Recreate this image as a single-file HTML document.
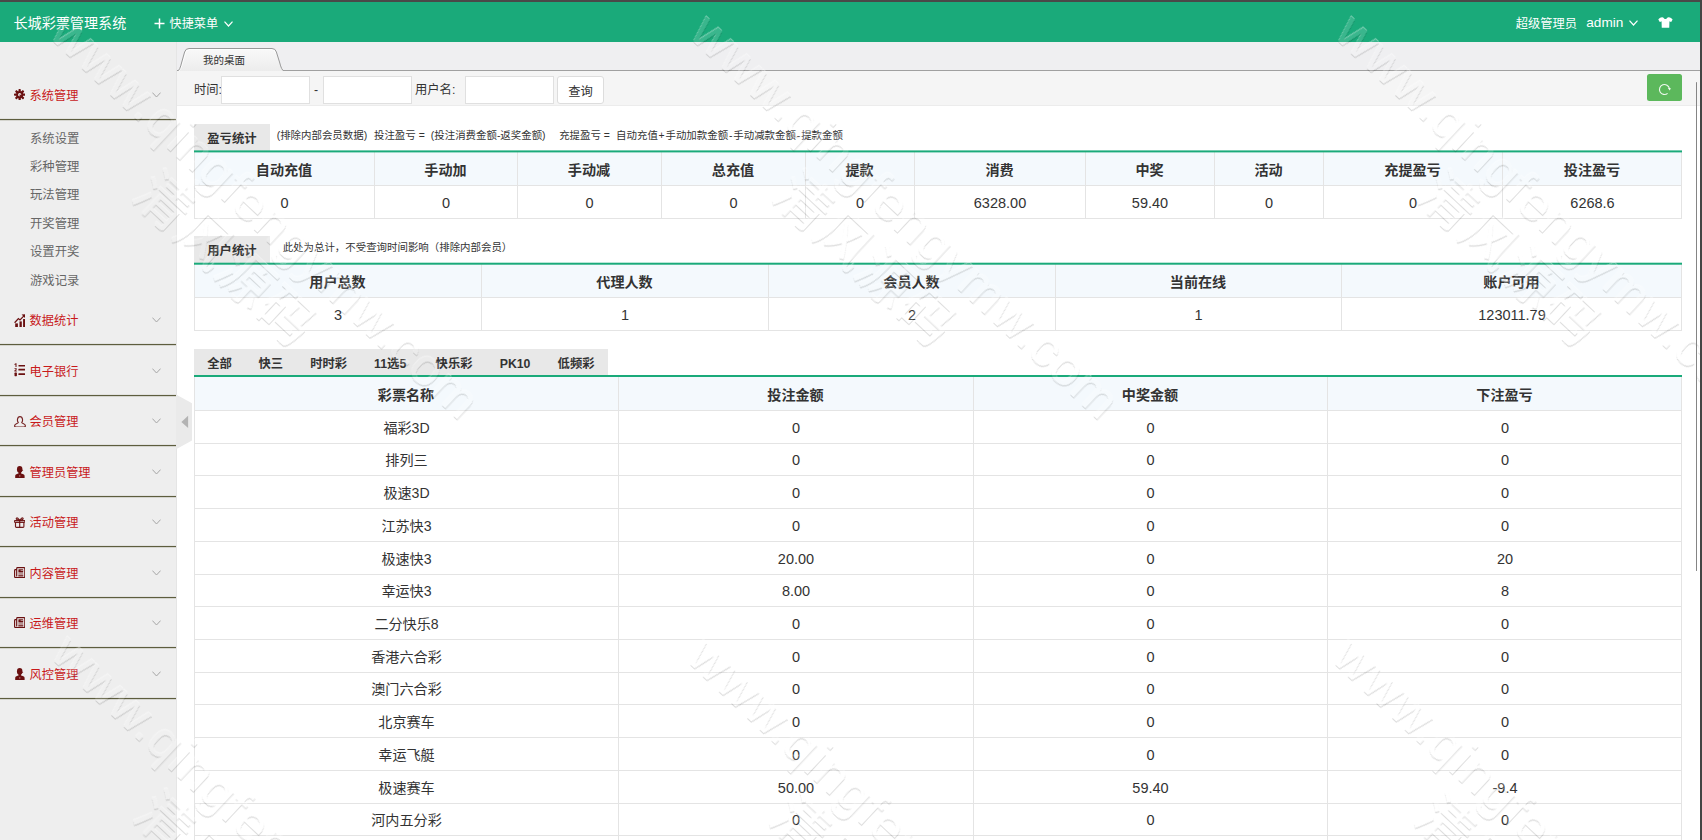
<!DOCTYPE html>
<html lang="zh-CN">
<head>
<meta charset="utf-8">
<title>长城彩票管理系统</title>
<style>
*{box-sizing:border-box;margin:0;padding:0}
html,body{width:1702px;height:840px;overflow:hidden;background:#fff}
body{font-family:"Liberation Sans","Noto Sans CJK SC",sans-serif;color:#333;position:relative}
#frame-top{position:absolute;left:0;top:0;width:1702px;height:2px;background:#4a4848;z-index:50}
#frame-right{position:absolute;left:1700px;top:0;width:2px;height:840px;background:#444;z-index:50}
#hdr{position:absolute;left:0;top:2px;width:1700px;height:40px;background:#1aaa7a;color:#fff}
#hdr span,#hdr svg{position:absolute;white-space:nowrap}
#hdr .title{left:13.5px;top:1px;line-height:41px;font-size:14.1px}
#hdr .q{left:169.6px;top:1.8px;line-height:41.6px;font-size:12.1px}
#hdr .u1{left:1515.8px;top:1.8px;line-height:40.4px;font-size:12.25px}
#hdr .u2{left:1586.3px;top:0.7px;line-height:40.4px;font-size:13.6px}
#side{position:absolute;left:0;top:42px;width:177px;height:798px;background:#eee;border-right:1px solid #e5e5e5}
#sidec{position:absolute;left:0;top:0;width:177px}
#sidec .sep{position:absolute;left:0;width:176px;height:1px;background:#5d5d3e;box-shadow:0 1px 0 rgba(93,93,62,.18),0 -1px 0 rgba(93,93,62,.08)}
#sidec .ic{position:absolute}
#sidec .mt{position:absolute;left:29.6px;line-height:20px;font-size:12.2px;color:#c8191b;white-space:nowrap}
#sidec .chev{position:absolute;left:152.3px}
#sidec .si{position:absolute;left:30px;line-height:20px;font-size:12.35px;color:#666;white-space:nowrap}
#handle{position:absolute;left:176px;top:395px;z-index:5}
#tabs{position:absolute;left:177px;top:42px;width:1523px;height:29px;background:#efeff1;border-bottom:1px solid #a0a0a0}
#tabs svg{position:absolute;left:0;top:5px}
#tabs span{position:absolute;left:26px;top:6.5px;line-height:22px;font-size:10.5px;color:#333}
#filter{position:absolute;left:177px;top:71px;width:1523px;height:35px;background:#f5f5f5;border-bottom:1px solid #ececec;font-size:12.3px;color:#333}
#filter label{position:absolute;top:2px;line-height:35px;white-space:nowrap}
#filter .inp{position:absolute;top:5px;height:28px;width:89px;background:#fff;border:1px solid #e0e0e0}
#filter .btn{position:absolute;left:380px;top:5px;width:47px;height:28px;background:#fff;border:1px solid #ddd;border-radius:3px;text-align:center;line-height:30.4px;font-size:12.3px;color:#333}
#filter .ref{position:absolute;left:1470px;top:3px;width:35px;height:27px;background:#5cb85c;border-radius:2.5px}
#filter .ref svg{position:absolute;left:11px;top:9.2px}
#sb{position:absolute;left:1695.6px;top:82px;width:1.6px;height:489px;background:#858585;border-radius:1px;z-index:40}
.stab{position:absolute;left:194px;background:#e8e8e8}
.stab span{position:absolute;top:3.7px;line-height:22px;font-weight:bold;font-size:12.3px;color:#333;white-space:nowrap}
.gl{position:absolute;left:194px;width:1488px;z-index:2}
.desc{position:absolute;line-height:22px;font-size:10.45px;color:#333;white-space:nowrap}
.desc b{position:absolute;top:0.5px;font-weight:normal}
.row{position:absolute;border-bottom:1px solid #e4e4e4;border-right:1px solid #e4e4e4}
.row.hr{background:#f4f9fd}
.row.dr{background:#fff}
.c{position:absolute;top:0;height:100%;border-left:1px solid #e4e4e4;text-align:center;white-space:nowrap;color:#333;overflow:hidden}
.hr .c{font-size:14.1px;font-weight:bold;padding-top:1.7px;text-indent:-1px}
.dr .c{font-size:14.5px;padding-top:1px}
.dr .c.nm{font-size:14.1px}

#wm{position:absolute;left:0;top:0;width:1700px;height:840px;overflow:hidden;z-index:30;pointer-events:none}
.wm{position:absolute;transform-origin:0 0;transform:rotate(43.1deg);text-align:center;white-space:nowrap;color:rgba(255,255,255,.14);filter:url(#emb);font-weight:normal}
.wm .l1{font-size:52.5px;line-height:58px;letter-spacing:1px}
.wm .l2{font-size:54px;line-height:62px;letter-spacing:2px}
</style>
</head>
<body>
<div id="frame-top"></div><div id="frame-right"></div>
<div id="hdr">
 <span class="title">长城彩票管理系统</span>
 <svg style="left:154px;top:16px" width="11" height="11" viewBox="0 0 11 11"><path d="M5.5 0.5V10.5M0.5 5.5H10.5" stroke="#fff" stroke-width="1.5" fill="none"/></svg>
 <span class="q">快捷菜单</span>
 <svg style="left:224px;top:18.7px" width="9" height="6" viewBox="0 0 9 6"><path d="M0.5 0.7L4.5 5L8.5 0.7" fill="none" stroke="#fff" stroke-width="1.2"/></svg>
 <span class="u1">超级管理员</span><span class="u2">admin</span>
 <svg style="left:1629.3px;top:18px" width="9" height="6" viewBox="0 0 9 6"><path d="M0.5 0.7L4.5 5L8.5 0.7" fill="none" stroke="#fff" stroke-width="1.2"/></svg>
 <svg style="left:1658.1px;top:15.2px" width="14.8" height="10.9" viewBox="0 0 15 11" preserveAspectRatio="none"><path d="M4.2 0.2 C5 0.2 5.6 0.6 6 1.2 Q7.5 2.9 9 1.2 C9.4 0.6 10 0.2 10.8 0.2 C12.6 0.5 14 1.4 14.8 2.6 L13.4 5.1 C12.8 5 12.2 4.7 11.6 4.3 L11.4 10.8 H3.8 L3.6 4.3 C3 4.7 2.4 5 1.8 5.1 L0.3 2.6 C1 1.4 2.4 0.5 4.2 0.2Z" fill="#fff"/></svg>
</div>
<div id="side"></div>
<div id="sidec">
<div class="sep" style="top:119px"></div><svg class="ic" style="left:13.8px;top:88.9px" width="11.3" height="11.3" viewBox="0 0 24 24"><g fill="#6a1010"><circle cx="12" cy="12" r="7.6"/><g id="t"><rect x="9.6" y="0" width="4.8" height="6" rx="1.6"/><rect x="9.6" y="18" width="4.8" height="6" rx="1.6"/></g><use href="#t" transform="rotate(45 12 12)"/><use href="#t" transform="rotate(90 12 12)"/><use href="#t" transform="rotate(135 12 12)"/></g><circle cx="12" cy="12" r="3.4" fill="#eee"/><path d="M12 12 L17 18" stroke="#6a1010" stroke-width="2.4"/></svg><span class="mt" style="top:85.5px">系统管理</span><svg class="chev" style="top:92.1px" width="9" height="6" viewBox="0 0 9 6"><path d="M0.4 0.6L4.5 5L8.6 0.6" fill="none" stroke="#a6a6a6" stroke-width="1"/></svg>
<div class="sep" style="top:344px"></div><svg class="ic" style="left:13.7px;top:313.8px" width="11.6" height="13.4" viewBox="0 0 11.6 13.4"><g fill="#6a1010"><rect x="1.2" y="9.4" width="2.7" height="4"/><rect x="5.5" y="7.4" width="2.3" height="6"/><rect x="9.1" y="5" width="2.3" height="8.4"/><path d="M7.6 0.5 L11.5 0.2 L11.2 4.1Z"/></g><path d="M0.6 8.8 L4.4 4.6 L6 5.9 L10.2 1.6" fill="none" stroke="#6a1010" stroke-width="1.25"/></svg><span class="mt" style="top:310.5px">数据统计</span><svg class="chev" style="top:317.1px" width="9" height="6" viewBox="0 0 9 6"><path d="M0.4 0.6L4.5 5L8.6 0.6" fill="none" stroke="#a6a6a6" stroke-width="1"/></svg>
<div class="sep" style="top:395px"></div><svg class="ic" style="left:13.7px;top:363.2px" width="11.8" height="13.4" viewBox="0 0 11.8 13.4"><g fill="#6a1010"><rect x="4.4" y="1.9" width="7.3" height="1.7" rx=".5"/><rect x="4.4" y="5.8" width="7.3" height="1.7" rx=".5"/><rect x="4.4" y="10.2" width="7.3" height="1.7" rx=".5"/><path d="M0.5 1 L1.8 0.3 H2.5 V3.9 H1.5 V1.5 L0.5 2Z"/><path d="M0.5 5.2 H2.7 V6.6 L1.5 7.6 H2.8 V8.5 H0.4 V7.5 L1.8 6.3 V6 H0.5Z"/><rect x="0.5" y="9.6" width="2.4" height="3.6" rx=".6"/></g></svg><span class="mt" style="top:361.5px">电子银行</span><svg class="chev" style="top:368.1px" width="9" height="6" viewBox="0 0 9 6"><path d="M0.4 0.6L4.5 5L8.6 0.6" fill="none" stroke="#a6a6a6" stroke-width="1"/></svg>
<div class="sep" style="top:445px"></div><svg class="ic" style="left:13.9px;top:415.7px" width="12" height="11.6" viewBox="0 0 12 11.6"><path d="M4.3 6.5 C3 5.4 3 0.7 6 0.7 C9 0.7 9 5.4 7.7 6.5 C7.9 7.6 11.4 7.5 11.4 9.8 Q11.4 11 10.1 11 H1.9 Q0.6 11 0.6 9.8 C0.6 7.5 4.1 7.6 4.3 6.5Z" fill="none" stroke="#6a1010" stroke-width="1.15" stroke-opacity=".92"/></svg><span class="mt" style="top:411.5px">会员管理</span><svg class="chev" style="top:418.1px" width="9" height="6" viewBox="0 0 9 6"><path d="M0.4 0.6L4.5 5L8.6 0.6" fill="none" stroke="#a6a6a6" stroke-width="1"/></svg>
<div class="sep" style="top:496px"></div><svg class="ic" style="left:14.8px;top:466.0px" width="9.8" height="12" viewBox="0 0 9.8 12"><g fill="#6a1010"><ellipse cx="4.7" cy="3.4" rx="2.75" ry="3.3"/><rect x="3.5" y="5.8" width="2.6" height="2.6"/><path d="M0.2 11.9 V9.7 C0.2 8.3 2.4 7.9 3.6 7.5 H6 C7.2 7.9 9.6 8.3 9.6 9.7 V11.9Z"/><circle cx="7.6" cy="4.2" r=".5"/></g><path d="M4.8 9 V10.8" stroke="#c8a0a0" stroke-width=".7"/></svg><span class="mt" style="top:462.5px">管理员管理</span><svg class="chev" style="top:469.1px" width="9" height="6" viewBox="0 0 9 6"><path d="M0.4 0.6L4.5 5L8.6 0.6" fill="none" stroke="#a6a6a6" stroke-width="1"/></svg>
<div class="sep" style="top:546px"></div><svg class="ic" style="left:13.9px;top:517.2px" width="11.4" height="11" viewBox="0 0 11.4 11"><g fill="none" stroke="#6a1010" stroke-width="1.15" stroke-opacity=".95"><rect x="1.5" y="5.2" width="8.4" height="5.2" rx=".8"/><rect x="0.6" y="3.5" width="10.2" height="1.7" rx=".3"/><path d="M5.7 3.5 V10.4"/><path d="M5.7 3.2 C4.5 1.8 3.3 0.2 2.5 1.1 C1.6 2.2 3.3 3.2 5.7 3.4 C8.1 3.2 9.8 2.2 8.9 1.1 C8.1 0.2 6.9 1.8 5.7 3.2"/></g></svg><span class="mt" style="top:512.5px">活动管理</span><svg class="chev" style="top:519.1px" width="9" height="6" viewBox="0 0 9 6"><path d="M0.4 0.6L4.5 5L8.6 0.6" fill="none" stroke="#a6a6a6" stroke-width="1"/></svg>
<div class="sep" style="top:597px"></div><svg class="ic" style="left:13.9px;top:566.8px" width="11.4" height="11.2" viewBox="0 0 11.4 11.2"><g fill="none" stroke="#6a1010" stroke-width="1.15"><path d="M2.7 2.6 H1.4 Q0.6 2.6 0.6 3.4 V9.6 Q0.6 10.6 1.6 10.6 H9.9 Q10.8 10.6 10.8 9.6 V1.4 Q10.8 0.6 10 0.6 H3.5 Q2.7 0.6 2.7 1.4 V9.4"/></g><g fill="#6a1010"><rect x="4.4" y="2.3" width="4.8" height="3.3" rx=".4"/><rect x="4.3" y="6.6" width="5" height=".8"/><rect x="4.3" y="8" width="5" height="1.6" opacity=".8"/></g><rect x="6.6" y="3.1" width="2.6" height=".8" fill="#eee" opacity=".7"/></svg><span class="mt" style="top:563.5px">内容管理</span><svg class="chev" style="top:570.1px" width="9" height="6" viewBox="0 0 9 6"><path d="M0.4 0.6L4.5 5L8.6 0.6" fill="none" stroke="#a6a6a6" stroke-width="1"/></svg>
<div class="sep" style="top:647px"></div><svg class="ic" style="left:13.9px;top:616.8px" width="11.4" height="11.2" viewBox="0 0 11.4 11.2"><g fill="none" stroke="#6a1010" stroke-width="1.15"><path d="M2.7 2.6 H1.4 Q0.6 2.6 0.6 3.4 V9.6 Q0.6 10.6 1.6 10.6 H9.9 Q10.8 10.6 10.8 9.6 V1.4 Q10.8 0.6 10 0.6 H3.5 Q2.7 0.6 2.7 1.4 V9.4"/></g><g fill="#6a1010"><rect x="4.4" y="2.3" width="4.8" height="3.3" rx=".4"/><rect x="4.3" y="6.6" width="5" height=".8"/><rect x="4.3" y="8" width="5" height="1.6" opacity=".8"/></g><rect x="6.6" y="3.1" width="2.6" height=".8" fill="#eee" opacity=".7"/></svg><span class="mt" style="top:613.5px">运维管理</span><svg class="chev" style="top:620.1px" width="9" height="6" viewBox="0 0 9 6"><path d="M0.4 0.6L4.5 5L8.6 0.6" fill="none" stroke="#a6a6a6" stroke-width="1"/></svg>
<div class="sep" style="top:698px"></div><svg class="ic" style="left:14.8px;top:668.0px" width="9.8" height="12" viewBox="0 0 9.8 12"><g fill="#6a1010"><ellipse cx="4.7" cy="3.4" rx="2.75" ry="3.3"/><rect x="3.5" y="5.8" width="2.6" height="2.6"/><path d="M0.2 11.9 V9.7 C0.2 8.3 2.4 7.9 3.6 7.5 H6 C7.2 7.9 9.6 8.3 9.6 9.7 V11.9Z"/><circle cx="7.6" cy="4.2" r=".5"/></g><path d="M4.8 9 V10.8" stroke="#c8a0a0" stroke-width=".7"/></svg><span class="mt" style="top:664.5px">风控管理</span><svg class="chev" style="top:671.1px" width="9" height="6" viewBox="0 0 9 6"><path d="M0.4 0.6L4.5 5L8.6 0.6" fill="none" stroke="#a6a6a6" stroke-width="1"/></svg>
<span class="si" style="top:128.5px">系统设置</span><span class="si" style="top:156.9px">彩种管理</span><span class="si" style="top:185.3px">玩法管理</span><span class="si" style="top:213.7px">开奖管理</span><span class="si" style="top:242.1px">设置开奖</span><span class="si" style="top:270.5px">游戏记录</span></div>
<svg id="handle" width="16" height="54" viewBox="0 0 16 54"><path d="M0 0 L1 0 L16 8.2 L16 45.5 L1 53.8 L0 53.8Z" fill="#eaeaea"/><path d="M12.1 20.8 L5.4 26.9 L12.1 32.9Z" fill="#b3b3b3"/></svg>
<div id="tabs"><svg width="110" height="25" viewBox="0 0 110 25"><defs><linearGradient id="tg" x1="0" y1="0" x2="0" y2="1"><stop offset="0" stop-color="#f9f9f9"/><stop offset="1" stop-color="#ececec"/></linearGradient></defs><path d="M0 24.5 C2.5 23.5 3.5 20 4.5 16 L7.6 5 Q8.6 1.5 12 1.5 H95 Q98.4 1.5 99.4 5 L102.8 16 C103.8 20 105 23.5 107.5 24.5Z" fill="url(#tg)"/><path d="M1.6 24 C3.6 22.5 4.5 20 5.5 16.4 L8.6 5.6 Q9.4 2.6 12 2.6 H95 Q97.6 2.6 98.4 5.6" fill="none" stroke="#fff" stroke-width="1" stroke-opacity=".85"/><path d="M0 24.5 C2.5 23.5 3.5 20 4.5 16 L7.6 5 Q8.6 1.5 12 1.5 H95 Q98.4 1.5 99.4 5 L102.8 16 C103.8 20 105 23.5 107.5 24.5" fill="none" stroke="#999" stroke-width="1"/></svg><span>我的桌面</span></div>
<div id="filter">
 <label style="left:17px">时间:</label><div class="inp" style="left:44px"></div>
 <label style="left:137px">-</label><div class="inp" style="left:146px"></div>
 <label style="left:238px">用户名:</label><div class="inp" style="left:288px"></div>
 <div class="btn">查询</div>
 <div class="ref"><svg width="13" height="13" viewBox="0 0 13 13"><path d="M9.6 10.4 A5 5 0 1 1 11.4 5.6" fill="none" stroke="#fff" stroke-opacity=".9" stroke-width="1.1"/><path d="M9.9 5.2 L12.7 5.0 L11.9 7.6Z" fill="#fff"/></svg></div>
</div>
<div id="sb"></div>
<svg width="0" height="0" style="position:absolute"><filter id="emb" x="-2%" y="-5%" width="104%" height="110%" color-interpolation-filters="sRGB">
<feComponentTransfer in="SourceAlpha" result="sa"><feFuncA type="linear" slope="9"/></feComponentTransfer>
<feOffset in="sa" dx="0.8" dy="0.9" result="o1"/><feComposite in="o1" in2="sa" operator="out" result="rim1"/>
<feFlood flood-color="#000" flood-opacity=".13"/><feComposite in2="rim1" operator="in" result="dark"/>
<feOffset in="sa" dx="-0.7" dy="-0.7" result="o2"/><feComposite in="o2" in2="sa" operator="out" result="rim2"/>
<feFlood flood-color="#fff" flood-opacity=".38"/><feComposite in2="rim2" operator="in" result="light"/>
<feFlood flood-color="#fff" flood-opacity=".14"/><feComposite in2="sa" operator="in" result="fill"/>
<feMerge><feMergeNode in="fill"/><feMergeNode in="dark"/><feMergeNode in="light"/></feMerge></filter></svg>
<div id="wm"><div class="wm" style="left:79.5px;top:2px"><div class="l1">www.qingfengymw.com</div><div class="l2">清风源码</div></div><div class="wm" style="left:719.5px;top:2px"><div class="l1">www.qingfengymw.com</div><div class="l2">清风源码</div></div><div class="wm" style="left:1364.5px;top:2px"><div class="l1">www.qingfengymw.com</div><div class="l2">清风源码</div></div><div class="wm" style="left:80.5px;top:621.5px"><div class="l1">www.qingfengymw.com</div><div class="l2">清风源码</div></div><div class="wm" style="left:717px;top:624.5px"><div class="l1">www.qingfengymw.com</div><div class="l2">清风源码</div></div><div class="wm" style="left:1362px;top:624.5px"><div class="l1">www.qingfengymw.com</div><div class="l2">清风源码</div></div></div>
<div class="stab" style="top:124px;width:76px;height:27px"><span style="left:13.3px">盈亏统计</span></div><div class="gl" style="top:150px;height:3px;background:linear-gradient(to bottom,rgba(26,170,122,0.60) 0 1px,#1aaa7a 1px 2px,rgba(26,170,122,0.40) 2px 3px)"></div><div class="desc" style="top:124px;left:276.7px"><b style="left:0">(排除内部会员数据)</b><b style="left:97.3px">投注盈亏 =</b><b style="left:154.1px">(投注消费金额-返奖金额)</b><b style="left:282.5px">充提盈亏 =</b><b style="left:339.4px">自动充值</b><b style="left:381.9px">+</b><b style="left:388.8px">手动加款金额</b><b style="left:452.3px">-</b><b style="left:456.6px">手动减款金额</b><b style="left:520.1px">-</b><b style="left:524.5px">提款金额</b></div><div class="row hr" style="top:152px;height:34px;left:194px;width:1488px"><div class="c" style="left:0px;width:180px;line-height:33px">自动充值</div><div class="c" style="left:180px;width:143px;line-height:33px">手动加</div><div class="c" style="left:323px;width:144px;line-height:33px">手动减</div><div class="c" style="left:467px;width:144px;line-height:33px">总充值</div><div class="c" style="left:611px;width:109px;line-height:33px">提款</div><div class="c" style="left:720px;width:171px;line-height:33px">消费</div><div class="c" style="left:891px;width:129px;line-height:33px">中奖</div><div class="c" style="left:1020px;width:109px;line-height:33px">活动</div><div class="c" style="left:1129px;width:179px;line-height:33px">充提盈亏</div><div class="c" style="left:1308px;width:180px;line-height:33px">投注盈亏</div></div>
<div class="row dr" style="top:186px;height:33px;left:194px;width:1488px"><div class="c" style="left:0px;width:180px;line-height:32px">0</div><div class="c" style="left:180px;width:143px;line-height:32px">0</div><div class="c" style="left:323px;width:144px;line-height:32px">0</div><div class="c" style="left:467px;width:144px;line-height:32px">0</div><div class="c" style="left:611px;width:109px;line-height:32px">0</div><div class="c" style="left:720px;width:171px;line-height:32px">6328.00</div><div class="c" style="left:891px;width:129px;line-height:32px">59.40</div><div class="c" style="left:1020px;width:109px;line-height:32px">0</div><div class="c" style="left:1129px;width:179px;line-height:32px">0</div><div class="c" style="left:1308px;width:180px;line-height:32px">6268.6</div></div>

<div class="stab" style="top:236px;width:76px;height:27px"><span style="left:13.3px">用户统计</span></div><div class="gl" style="top:262px;height:3px;background:linear-gradient(to bottom,rgba(26,170,122,0.30) 0 1px,#1aaa7a 1px 2px,rgba(26,170,122,0.70) 2px 3px)"></div><div class="desc" style="top:236px;left:282.7px"><b style="left:0">此处为总计，不受查询时间影响（排除内部会员）</b></div><div class="row hr" style="top:264px;height:34px;left:194px;width:1488px"><div class="c" style="left:0px;width:287px;line-height:33px">用户总数</div><div class="c" style="left:287px;width:287px;line-height:33px">代理人数</div><div class="c" style="left:574px;width:287px;line-height:33px">会员人数</div><div class="c" style="left:861px;width:286px;line-height:33px">当前在线</div><div class="c" style="left:1147px;width:341px;line-height:33px">账户可用</div></div>
<div class="row dr" style="top:298px;height:33px;left:194px;width:1488px"><div class="c" style="left:0px;width:287px;line-height:32px">3</div><div class="c" style="left:287px;width:287px;line-height:32px">1</div><div class="c" style="left:574px;width:287px;line-height:32px">2</div><div class="c" style="left:861px;width:286px;line-height:32px">1</div><div class="c" style="left:1147px;width:341px;line-height:32px">123011.79</div></div>

<div class="stab" style="top:349px;width:414px;height:27px"><span style="left:13.3px">全部</span><span style="left:64.5px">快三</span><span style="left:116.2px">时时彩</span><span style="left:180.1px">11选5</span><span style="left:241.6px">快乐彩</span><span style="left:305.7px">PK10</span><span style="left:363.6px">低频彩</span></div><div class="gl" style="top:375px;height:2px;background:#1aaa7a"></div><div class="row hr" style="top:377px;height:34px;left:194px;width:1488px"><div class="c" style="left:0px;width:424px;line-height:33px">彩票名称</div><div class="c" style="left:424px;width:355px;line-height:33px">投注金额</div><div class="c" style="left:779px;width:354px;line-height:33px">中奖金额</div><div class="c" style="left:1133px;width:355px;line-height:33px">下注盈亏</div></div>
<div class="row dr" style="top:411px;height:33px;left:194px;width:1488px"><div class="c nm" style="left:0px;width:424px;line-height:32px">福彩3D</div><div class="c" style="left:424px;width:355px;line-height:32px">0</div><div class="c" style="left:779px;width:354px;line-height:32px">0</div><div class="c" style="left:1133px;width:355px;line-height:32px">0</div></div>
<div class="row dr" style="top:444px;height:32px;left:194px;width:1488px"><div class="c nm" style="left:0px;width:424px;line-height:31px">排列三</div><div class="c" style="left:424px;width:355px;line-height:31px">0</div><div class="c" style="left:779px;width:354px;line-height:31px">0</div><div class="c" style="left:1133px;width:355px;line-height:31px">0</div></div>
<div class="row dr" style="top:476px;height:33px;left:194px;width:1488px"><div class="c nm" style="left:0px;width:424px;line-height:32px">极速3D</div><div class="c" style="left:424px;width:355px;line-height:32px">0</div><div class="c" style="left:779px;width:354px;line-height:32px">0</div><div class="c" style="left:1133px;width:355px;line-height:32px">0</div></div>
<div class="row dr" style="top:509px;height:33px;left:194px;width:1488px"><div class="c nm" style="left:0px;width:424px;line-height:32px">江苏快3</div><div class="c" style="left:424px;width:355px;line-height:32px">0</div><div class="c" style="left:779px;width:354px;line-height:32px">0</div><div class="c" style="left:1133px;width:355px;line-height:32px">0</div></div>
<div class="row dr" style="top:542px;height:33px;left:194px;width:1488px"><div class="c nm" style="left:0px;width:424px;line-height:32px">极速快3</div><div class="c" style="left:424px;width:355px;line-height:32px">20.00</div><div class="c" style="left:779px;width:354px;line-height:32px">0</div><div class="c" style="left:1133px;width:355px;line-height:32px">20</div></div>
<div class="row dr" style="top:575px;height:32px;left:194px;width:1488px"><div class="c nm" style="left:0px;width:424px;line-height:31px">幸运快3</div><div class="c" style="left:424px;width:355px;line-height:31px">8.00</div><div class="c" style="left:779px;width:354px;line-height:31px">0</div><div class="c" style="left:1133px;width:355px;line-height:31px">8</div></div>
<div class="row dr" style="top:607px;height:33px;left:194px;width:1488px"><div class="c nm" style="left:0px;width:424px;line-height:32px">二分快乐8</div><div class="c" style="left:424px;width:355px;line-height:32px">0</div><div class="c" style="left:779px;width:354px;line-height:32px">0</div><div class="c" style="left:1133px;width:355px;line-height:32px">0</div></div>
<div class="row dr" style="top:640px;height:33px;left:194px;width:1488px"><div class="c nm" style="left:0px;width:424px;line-height:32px">香港六合彩</div><div class="c" style="left:424px;width:355px;line-height:32px">0</div><div class="c" style="left:779px;width:354px;line-height:32px">0</div><div class="c" style="left:1133px;width:355px;line-height:32px">0</div></div>
<div class="row dr" style="top:673px;height:32px;left:194px;width:1488px"><div class="c nm" style="left:0px;width:424px;line-height:31px">澳门六合彩</div><div class="c" style="left:424px;width:355px;line-height:31px">0</div><div class="c" style="left:779px;width:354px;line-height:31px">0</div><div class="c" style="left:1133px;width:355px;line-height:31px">0</div></div>
<div class="row dr" style="top:705px;height:33px;left:194px;width:1488px"><div class="c nm" style="left:0px;width:424px;line-height:32px">北京赛车</div><div class="c" style="left:424px;width:355px;line-height:32px">0</div><div class="c" style="left:779px;width:354px;line-height:32px">0</div><div class="c" style="left:1133px;width:355px;line-height:32px">0</div></div>
<div class="row dr" style="top:738px;height:33px;left:194px;width:1488px"><div class="c nm" style="left:0px;width:424px;line-height:32px">幸运飞艇</div><div class="c" style="left:424px;width:355px;line-height:32px">0</div><div class="c" style="left:779px;width:354px;line-height:32px">0</div><div class="c" style="left:1133px;width:355px;line-height:32px">0</div></div>
<div class="row dr" style="top:771px;height:33px;left:194px;width:1488px"><div class="c nm" style="left:0px;width:424px;line-height:32px">极速赛车</div><div class="c" style="left:424px;width:355px;line-height:32px">50.00</div><div class="c" style="left:779px;width:354px;line-height:32px">59.40</div><div class="c" style="left:1133px;width:355px;line-height:32px">-9.4</div></div>
<div class="row dr" style="top:804px;height:32px;left:194px;width:1488px"><div class="c nm" style="left:0px;width:424px;line-height:31px">河内五分彩</div><div class="c" style="left:424px;width:355px;line-height:31px">0</div><div class="c" style="left:779px;width:354px;line-height:31px">0</div><div class="c" style="left:1133px;width:355px;line-height:31px">0</div></div>
<div class="row dr" style="top:836px;height:33px;left:194px;width:1488px"><div class="c nm" style="left:0px;width:424px;line-height:32px">河内一分彩</div><div class="c" style="left:424px;width:355px;line-height:32px">0</div><div class="c" style="left:779px;width:354px;line-height:32px">0</div><div class="c" style="left:1133px;width:355px;line-height:32px">0</div></div>

</body>
</html>
